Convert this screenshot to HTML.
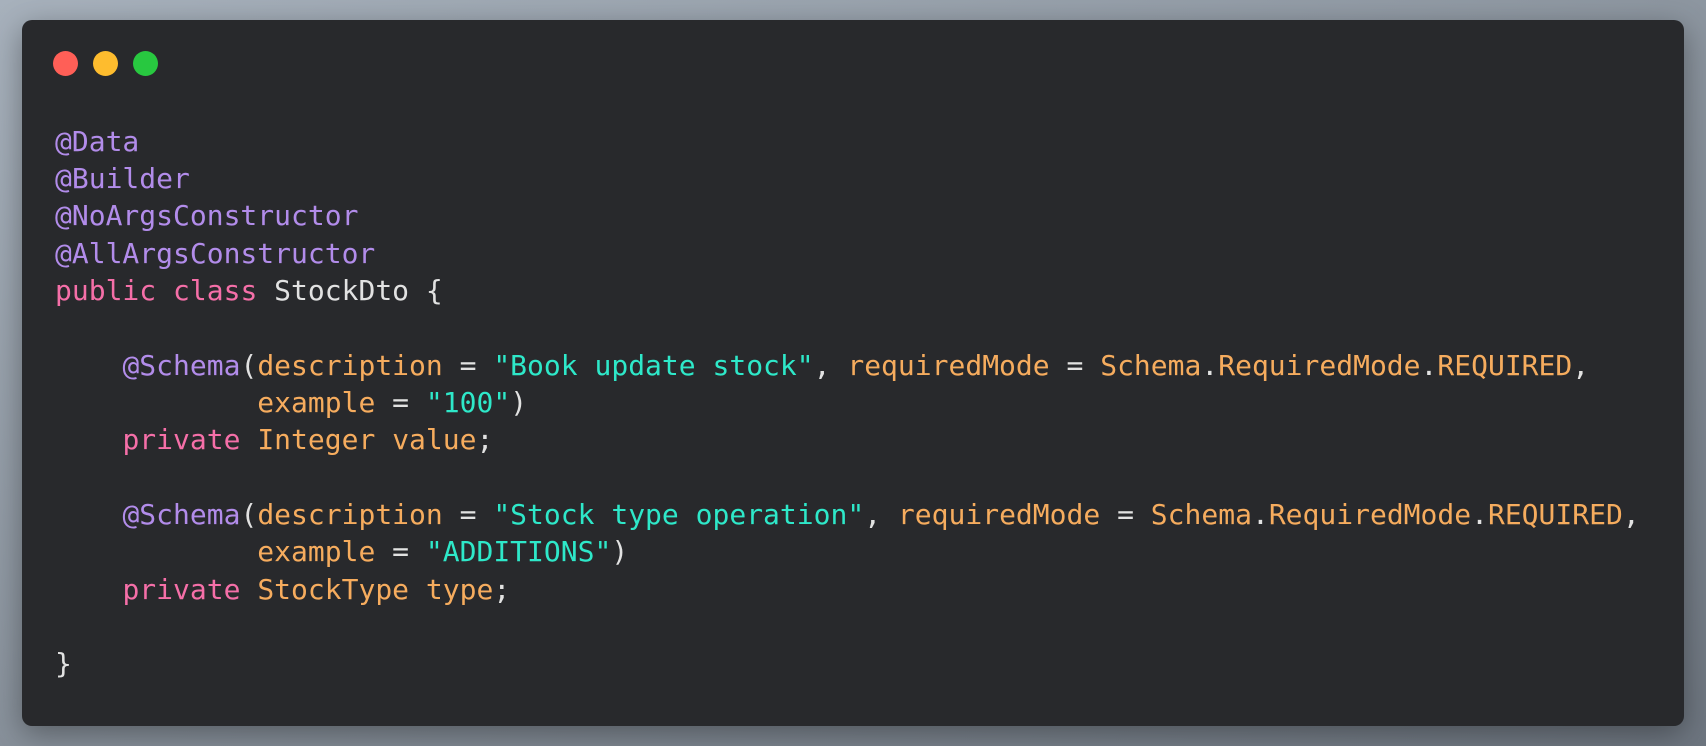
<!DOCTYPE html>
<html><head><meta charset="utf-8"><style>
html,body{margin:0;padding:0;}
body{width:1706px;height:746px;overflow:hidden;background:linear-gradient(160deg,#a7b1bc 0%,#8a939d 50%,#6d757f 100%);position:relative;}
.win{position:absolute;left:22px;top:20px;width:1662px;height:706px;background:#28292c;border-radius:10px;box-shadow:0 8px 30px rgba(0,0,0,.35);}
.dot{position:absolute;top:31px;width:25px;height:25px;border-radius:50%;}
pre{position:absolute;left:55px;top:122.5px;margin:0;font-family:"DejaVu Sans Mono","Liberation Mono",monospace;font-size:28px;line-height:37.35px;color:#e2e2e2;}
.a{color:#b28cea}.k{color:#f56fa8}.o{color:#f6ac5e}.s{color:#2ee8c9}
</style></head><body>
<div class="win">
<div class="dot" style="left:31px;background:#ff5f57"></div>
<div class="dot" style="left:71px;background:#febc2e"></div>
<div class="dot" style="left:111px;background:#28c840"></div>
</div>
<pre><span class="a">@Data</span>
<span class="a">@Builder</span>
<span class="a">@NoArgsConstructor</span>
<span class="a">@AllArgsConstructor</span>
<span class="k">public</span> <span class="k">class</span> StockDto {

    <span class="a">@Schema</span>(<span class="o">description</span> = <span class="s">"Book update stock"</span>, <span class="o">requiredMode</span> = <span class="o">Schema</span>.<span class="o">RequiredMode</span>.<span class="o">REQUIRED</span>,
            <span class="o">example</span> = <span class="s">"100"</span>)
    <span class="k">private</span> <span class="o">Integer</span> <span class="o">value</span>;

    <span class="a">@Schema</span>(<span class="o">description</span> = <span class="s">"Stock type operation"</span>, <span class="o">requiredMode</span> = <span class="o">Schema</span>.<span class="o">RequiredMode</span>.<span class="o">REQUIRED</span>,
            <span class="o">example</span> = <span class="s">"ADDITIONS"</span>)
    <span class="k">private</span> <span class="o">StockType</span> <span class="o">type</span>;

}</pre>
</body></html>
